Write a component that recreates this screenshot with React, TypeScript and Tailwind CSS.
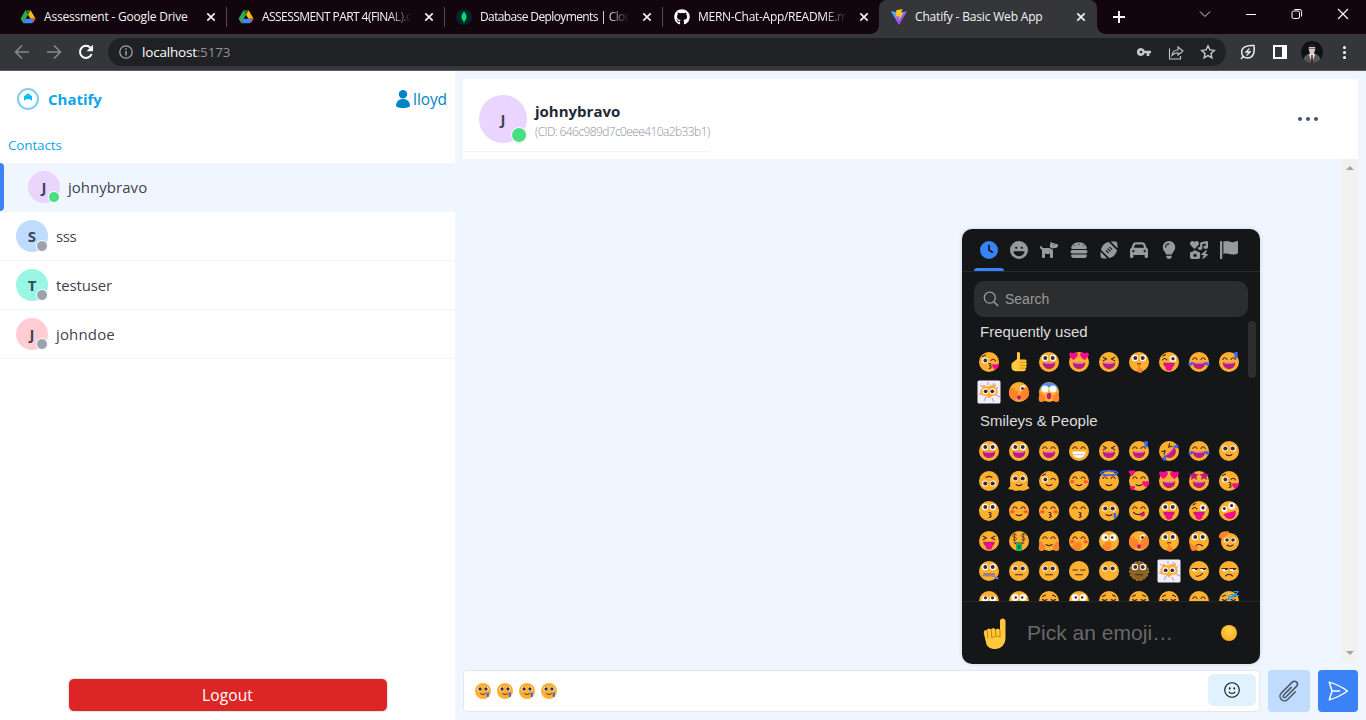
import React, { type ReactNode } from 'react';
import { FaBurger, FaCar, FaClock, FaDog, FaFaceLaugh, FaFootball, FaIcons, FaLightbulb, FaGithub } from 'react-icons/fa6';

/* ---------- emoji drawing ---------- */

const DARK = '#402a32';
const PINK = '#f70a8d';
const PLUM = '#bb1d80';
const BLUE = '#3b63f5';

const line = { fill: 'none', stroke: DARK, strokeWidth: 1.1, strokeLinecap: 'round' as const, strokeLinejoin: 'round' as const };
const heart = 'M0 3C-5-.5-3.6-4 0-2.1 3.6-4 5-.5 0 3Z';

const PARTS: Record<string, ReactNode> = {
  face: <circle cx="10" cy="10" r="10" fill="#ffb02e" />,
  dotface: (
    <>
      <circle cx="10" cy="10" r="9.4" fill="#8a6422" />
      <circle cx="10" cy="10" r="9.5" fill="none" stroke="#f08a4b" strokeWidth="1" strokeDasharray="2 2" />
    </>
  ),
  melt: (
    <path d="M1 9C1 4 4.5 0 10 0s9 4 9 9c0 3.500-1 5 0 6.500 1.800.6 2 2.500.3 2.500-2 0-3.300 2.500-6.300 1.700-2-.8-3-.7-5 0C5 20.300 4 18 1.500 18.500-1 19-1 16.500.800 16 1.800 14 1 12 1 9Z" fill="#ffb02e" />
  ),
  cloud: (
    <>
      <rect x="-1.500" y="-1.500" width="23" height="23" rx="1.500" fill="#f3edfb" />
      <path d="M1 3l4 3M15 1l-2 4M19 5l-3 3M0 12l4 0M5 19l2-4M13 16l2 4M17 13l4 2M9 0l0 3" stroke="#a88ee0" strokeWidth="1" />
      <path d="M10 4l2-1.500.800 1.800L17 2l-.5 4c3 2 3 6 0 7.500L13 14l-3 2.500L7 14l-3.500-.5c-3-2-3-5.500 0-7.500L4 2.500l4 2Z" fill="#ffb02e" />
      <circle cx="6.500" cy="9.300" r="3" fill="#fff" />
      <circle cx="13.500" cy="9.300" r="3" fill="#fff" />
      <circle cx="6.700" cy="9.300" r="1.900" fill={DARK} />
      <circle cx="13.300" cy="9.300" r="1.900" fill={DARK} />
    </>
  ),
  open: (
    <>
      <circle cx="6" cy="6" r="3.200" fill="#fff" />
      <circle cx="14" cy="6" r="3.200" fill="#fff" />
      <circle cx="6.300" cy="6" r="2" fill={DARK} />
      <circle cx="13.700" cy="6" r="2" fill={DARK} />
    </>
  ),
  small: (
    <>
      <circle cx="6" cy="7.500" r="2.900" fill="#fff" />
      <circle cx="14" cy="7.500" r="2.900" fill="#fff" />
      <circle cx="6.300" cy="7.500" r="2.100" fill={DARK} />
      <circle cx="13.700" cy="7.500" r="2.100" fill={DARK} />
    </>
  ),
  pin: (
    <>
      <circle cx="6" cy="6.500" r="3.500" fill="#fff" />
      <circle cx="14" cy="6.500" r="3.500" fill="#fff" />
      <circle cx="6.800" cy="6.500" r="1.300" fill={DARK} />
      <circle cx="13.200" cy="6.500" r="1.300" fill={DARK} />
    </>
  ),
  roll: (
    <>
      <circle cx="6" cy="8" r="3.300" fill="#fff" />
      <circle cx="14" cy="8" r="3.300" fill="#fff" />
      <circle cx="6.500" cy="6.800" r="1.600" fill={DARK} />
      <circle cx="13.500" cy="6.800" r="1.600" fill={DARK} />
    </>
  ),
  wide: (
    <>
      <path d="M.3 8A10 10 0 0 1 19.700 8C16 4 4 4 .3 8Z" fill="#4e8ff5" />
      <circle cx="6" cy="7" r="3.600" fill="#fff" />
      <circle cx="14" cy="7" r="3.600" fill="#fff" />
    </>
  ),
  happy: <path d="M3.800 7.500q2-3.400 4.200 0M12 7.500q2-3.400 4.200 0" {...line} />,
  sad: <path d="M3.500 8.500q2.200 2 4.300 0M12.200 8.500q2.200 2 4.300 0M3.500 5.500l3-1.500M16.500 5.500l-3-1.500" {...line} />,
  squint: <path d="M4.200 5.200l3.400 1.900-3.400 1.700M15.800 5.200l-3.400 1.900 3.400 1.700" {...line} />,
  dash: <path d="M4 9h4.200M11.800 9H16" {...line} />,
  wink: (
    <>
      <circle cx="6" cy="8.500" r="3" fill="#fff" />
      <circle cx="6.300" cy="8.500" r="1.900" fill={DARK} />
      <path d="M12 8.500q2.200-2.500 4.500.3M3.500 4.500l3-1.500" {...line} />
    </>
  ),
  winkR: (
    <>
      <circle cx="14" cy="6.800" r="3.300" fill="#fff" />
      <circle cx="14" cy="6.800" r="1.700" fill={DARK} />
      <path d="M3.500 7.800q2-2.600 4.300 0M4 4l2.500-1.500" {...line} />
    </>
  ),
  side: (
    <>
      <path d="M3 7.500h6a3 3 0 0 1-6 0ZM11 7.500h6a3 3 0 0 1-6 0Z" fill="#fff" />
      <path d="M6 7.500h3a2 2 0 0 1-3 1.500ZM14 7.500h3a2 2 0 0 1-3 1.500Z" fill={DARK} />
      <path d="M3 7.500h6M11 7.500h6" {...line} />
    </>
  ),
  crazy: (
    <>
      <circle cx="5.500" cy="8" r="3" fill="#fff" />
      <circle cx="12.800" cy="5" r="3.500" fill="#fff" />
      <circle cx="5.300" cy="7.500" r="1.500" fill={DARK} />
      <circle cx="12.600" cy="4.500" r="1.600" fill={DARK} />
      <path d="M4.500 13l12-3.200c1 4-1 8-5 8.200-3 0-6-2-7-5Z" fill={PINK} />
    </>
  ),
  hearts: (
    <>
      <path d={heart} transform="translate(4.500 4) scale(1.350)" fill={PINK} />
      <path d={heart} transform="translate(15.500 4) scale(1.350)" fill={PINK} />
    </>
  ),
  stars: (
    <path d="M5 0l1.300 3 3.500 0-2.500 2.600 1 3.400L5 7.300 2 9l.5-3.400L0 3h3.600ZM15 0l1.300 3H20l-2.600 2.600.6 3.400-3-1.700L11.800 9l1-3.400-2.500-2.600h3.500Z" fill={PLUM} />
  ),
  dollar: (
    <path d="M7.700 4.500C5 0 1.500 6 5.300 6.200 9.500 6.500 6.500 12 3.500 8M5.500 2.500v8M16.500 4.500c-2.700-4.500-6.200 1.500-2.400 1.700 4.200.3 1.200 5.800-1.800 1.800M14.300 2.500v8" fill="none" stroke={DARK} strokeWidth=".8" />
  ),
  grin: (
    <>
      <path d="M3.800 10.500h12.400c0 4.300-2.700 6.500-6.200 6.500s-6.200-2.200-6.200-6.500Z" fill={PLUM} />
      <path d="M5 10.500h10v.800q-5 1-10 0Z" fill="#fff" opacity=".5" />
    </>
  ),
  teeth: (
    <>
      <path d="M3.500 10.500h13c0 4.500-3 6.500-6.500 6.500s-6.500-2-6.500-6.500Z" fill="#fff" />
      <path d="M4.500 13.700h11" stroke="#c99ac1" strokeWidth=".8" />
    </>
  ),
  smile: <path d="M7 13.500q3 2.200 6 0" {...line} />,
  frown: <path d="M6.500 15q3.500-3.600 7 0" {...line} />,
  flat: <path d="M6.500 13.800h7" {...line} />,
  smirk: <path d="M7 15q4 1 6.500-2.500" {...line} />,
  kiss: <path d="M10 11.500c2.600-.2 2.400 2 .5 2.300 2.100.1 2.400 2.700-.3 2.600" {...line} />,
  lips: <path d={heart} transform="translate(16.500 14.700) scale(1.050)" fill={PINK} />,
  tongue: (
    <>
      <path d="M4.200 10.800h11.600c0 3-2.400 5.400-5.800 5.400s-5.800-2.400-5.800-5.400Z" fill={PLUM} />
      <path d="M6.500 12.200h7v3.500c0 4-7 4-7 0Z" fill={PINK} />
    </>
  ),
  yum: (
    <>
      <path d="M4.500 11.500q5 4.500 10.500-.5" {...line} />
      <path d="M11 13.500l4.500-2.300c1.500 3-1.500 5-3.500 4.300Z" fill={PINK} />
    </>
  ),
  bill: (
    <>
      <path d="M4.200 11.500h11.600q-5.800 5-11.600 0Z" fill={DARK} />
      <path d="M7 12h6v8H7Z" fill="#16b45a" />
      <path d="M9 14.500h2v3H9Z" fill="#0b6b3a" />
    </>
  ),
  scream: <ellipse cx="10" cy="14" rx="2.200" ry="3.300" fill={PLUM} />,
  blush: (
    <>
      <ellipse cx="3.300" cy="10.800" rx="2.300" ry="1.700" fill="#ff5a3c" />
      <ellipse cx="16.700" cy="10.800" rx="2.300" ry="1.700" fill="#ff5a3c" />
    </>
  ),
  shush: (
    <>
      <path d="M8.500 12q1.500-.8 3 0" {...line} />
      <path d="M9.200 12.800c0-1.500 1.800-1.500 1.800 0v2.700c3 0 3.200 3 2.500 4-1 1.800-4 1.800-5 0-.800-1.500-.300-3.500.7-4Z" fill="#ff822d" />
    </>
  ),
  cover: <path d="M3.500 13.500l2 .5 1-3 5 0c2 2 1 8-3 9-3 0-5-2-5-6.500Z" fill="#ff822d" />,
  chin: <path d="M1 13l2-1 1 3 5-1c1 2-1 6-5 6-2 0-3-3-3-7Z" fill="#ff822d" />,
  palms: (
    <path d="M.5 12l2-2 1.500 3 2 1c1 4-1 6-4 6S-.5 16 .5 12ZM19.500 12l-2-2-1.500 3-2 1c-1 4 1 6 4 6s2.500-4 1.500-8Z" fill="#ff822d" />
  ),
  peek: (
    <>
      <path d="M0 9l2-4 1 2 2-2 1 3 3 1c1 4-1 9-4 9-4-1-5.500-5-5-9ZM20 9l-2-3-7 7c-1 3 1 5 4 5 4-1 5.500-5 5-9Z" fill="#ff822d" />
      <circle cx="14" cy="6.500" r="2.900" fill="#fff" />
      <circle cx="13.500" cy="6.500" r="1.500" fill={DARK} />
      <path d="M11.500 10.500l5-6 2 3-4 6Z" fill="#ff822d" />
      <ellipse cx="10" cy="15.500" rx="2" ry="2.200" fill={PLUM} />
    </>
  ),
  hail: (
    <>
      <circle cx="11" cy="11" r="9" fill="#ffb02e" />
      <circle cx="7.800" cy="9" r="2.600" fill="#fff" />
      <circle cx="14.200" cy="9" r="2.600" fill="#fff" />
      <circle cx="8" cy="9" r="1.800" fill={DARK} />
      <circle cx="14" cy="9" r="1.800" fill={DARK} />
      <path d="M8 14q3 2.500 6 0" {...line} />
      <path d="M0 4.500C1 1 6-.500 10 .800l.500 1.700L3.500 7.500C1.500 8-.800 7 0 4.500Z" fill="#ff822d" />
    </>
  ),
  sweat: <path d="M15.500 0h3.200v5c0 2-3.200 2-3.200 0Z" fill={BLUE} />,
  tear: <path d="M14.600 12h2.700v4c0 2-2.700 2-2.700 0Z" fill={BLUE} />,
  joy: <path d="M3.500 9.500l.5 2c-.5 3-5 3-4.700 0ZM16.500 9.500l-.5 2c.5 3 5 3 4.700 0Z" fill={BLUE} />,
  halo: <ellipse cx="10" cy="2" rx="8.500" ry="2.300" fill="none" stroke={BLUE} strokeWidth="1.600" />,
  love: (
    <>
      <path d={heart} transform="translate(3 2)" fill={PINK} />
      <path d={heart} transform="translate(16.800 13) scale(1.100)" fill={PINK} />
      <path d={heart} transform="translate(3.500 17) scale(.8)" fill={PINK} />
    </>
  ),
  zip: (
    <>
      <path d="M4 13.500l1.500-1.500 1.500 2 1.500-2 1.500 2 1.500-2 1.500 2 1.500-2 1 2M4 15l1.500-1 1.500 1.500 1.500-1.500 1.500 1.500 1.500-1.500 1.500 1.500 1.500-1.500" fill="none" stroke="#5a5ec4" strokeWidth="1" />
      <path d="M14.500 14.500l4.500 3.500" stroke="#8a80d8" strokeWidth="2" />
    </>
  ),
  zzz: <path d="M8 5h3.500L8.500 8.500H12M11.500 3.500h3.500L12 7h3.500M15 .5h4L16 4.500h4" fill="none" stroke="#1fa2f0" strokeWidth="1.100" />,
};

const OWN_BASE = ['dotface', 'melt', 'cloud', 'hail'];

function Emoji({ parts, className = 'size-5' }: { parts: string; className?: string }) {
  const names = parts.split(' ');
  const base = OWN_BASE.includes(names[0]) ? names : ['face', ...names];
  const turned = names.includes('flip') ? 'rotate-180' : names.includes('tilt') ? '-rotate-45' : '';
  if (names[0] === 'thumb') {
    return (
      <svg viewBox="0 0 20 20" className={`${className} overflow-visible`}>
        <path d="M2.500 11.500L8 7V1.500C8-.5 11-.5 11 2v5.500h5c2 0 2 2.400.7 2.800 1.600.5 1.400 2.700 0 3 1.200.6 1 2.500-.3 2.800.8 1.300.1 3.200-1.700 3.200H7c-3 0-4.500-1.800-4.500-4Z" fill="#ffc83d" />
        <path d="M10.500 10.300h6M10.500 13.300h6M10.500 16.200h5.700" stroke="#d67d00" strokeWidth=".8" />
      </svg>
    );
  }
  return (
    <svg viewBox="0 0 20 20" className={`${className} overflow-visible ${turned}`}>
      {base.map((n, i) => (
        <React.Fragment key={i}>{PARTS[n]}</React.Fragment>
      ))}
    </svg>
  );
}

const FREQUENT = [
  'wink kiss lips', 'thumb', 'open grin', 'grin hearts', 'squint grin', 'open shush', 'winkR tongue', 'happy grin joy', 'happy grin sweat',
  'cloud', 'peek', 'wide scream palms',
];

const SMILEYS = [
  'open grin', 'open grin', 'happy grin', 'happy teeth', 'squint grin', 'happy grin sweat', 'tilt squint grin joy', 'happy grin joy', 'small smile',
  'flip small smile', 'melt small smile', 'wink smile', 'happy blush smile', 'happy smile halo', 'happy smile love', 'grin hearts', 'grin stars', 'wink kiss lips',
  'open kiss', 'happy blush smile', 'happy blush kiss', 'happy kiss', 'small smile tear', 'happy yum', 'open tongue', 'winkR tongue', 'crazy',
  'squint tongue', 'dollar bill', 'happy smile palms', 'happy blush cover', 'pin cover', 'peek', 'open shush', 'open frown chin', 'hail',
  'open zip', 'small flat', 'small flat', 'dash flat', 'small', 'dotface open flat', 'cloud', 'side smirk', 'side frown',
  'roll flat', 'pin teeth', 'sad flat', 'pin cover', 'sad smile', 'sad frown', 'sad smile', 'happy grin', 'sad zzz',
];

/* ---------- browser chrome ---------- */

const DriveIcon = () => (
  <svg viewBox="0 0 16 16" className="size-4">
    <path d="M5.400 1.300h5.200L8 5.800Z" fill="#188038" />
    <path d="M5.400 1.300L8 5.800 3.200 14.200.6 9.800Z" fill="#34a853" />
    <path d="M10.600 1.300l5 8.500h-5.200L8 5.800Z" fill="#fbbc04" />
    <path d="M10.400 9.800h5.200L13 14.300Z" fill="#ea4335" />
    <path d="M5.600 9.800h8l-1.500 4.500H3.200Z" fill="#4285f4" />
  </svg>
);

const MongoIcon = () => (
  <svg viewBox="0 0 16 16" className="size-4">
    <circle cx="8" cy="8" r="8" fill="#022430" />
    <path d="M8 2.500c3.300 4 3.300 7.200 0 10.300C4.700 9.700 4.700 6.500 8 2.500Z" fill="#00ed64" />
    <path d="M8 4v10" stroke="#00b85f" strokeWidth=".7" />
  </svg>
);

const ViteIcon = () => (
  <svg viewBox="0 0 16 16" className="size-4">
    <defs>
      <linearGradient id="vite" x1="0" y1="0" x2="1" y2="1">
        <stop offset="0" stopColor="#41d1ff" />
        <stop offset=".6" stopColor="#a24dfc" />
        <stop offset="1" stopColor="#bd34fe" />
      </linearGradient>
    </defs>
    <path d="M0 2.300l8 1.200 8-1.200L8 16Z" fill="url(#vite)" />
    <path d="M5.200 1.200L11.500 0 10 3.800l2.200.1L7.800 11.500l.4-4.500-3 .400Z" fill="#ffc61a" />
  </svg>
);

const Close = () => (
  <svg viewBox="0 0 16 16" className="size-4 shrink-0">
    <path d="M4.300 4.300l7.400 7.400M11.700 4.300l-7.400 7.400" stroke="#f1f1f1" strokeWidth="1.700" />
  </svg>
);

const PLAIN = 'w-[218px] pr-2 pl-[11px]';
const FADE = '[mask-image:linear-gradient(to_right,#000_84%,transparent_99%)]';

const TABS = [
  { title: 'Assessment - Google Drive', icon: <DriveIcon />, box: PLAIN, cls: 'tracking-[-0.21px]' },
  { title: 'ASSESSMENT PART 4(FINAL).c', icon: <DriveIcon />, box: PLAIN, cls: `tracking-[-0.57px] ${FADE}` },
  { title: 'Database Deployments | Clou', icon: <MongoIcon />, box: PLAIN, cls: `tracking-[-0.62px] ${FADE}` },
  { title: 'MERN-Chat-App/README.m', icon: <FaGithub className="size-4 text-white" />, box: 'w-[216px] pr-[7px] pl-[11px]', cls: `tracking-[-0.29px] ${FADE}` },
  { title: 'Chatify - Basic Web App', icon: <ViteIcon />, box: 'w-[218px] rounded-t-lg bg-[#35363a] pr-2 pl-3', cls: 'tracking-[-0.18px]', active: true },
];

function BrowserBar() {
  return (
    <header className="shrink-0">
      <div className="flex h-[34px] items-stretch bg-[#12050d] pl-[9px]">
        {TABS.map((t, i) => (
          <div key={t.title} className={`relative flex items-center ${t.box}`}>
            {t.active && (
              <>
                <span className="absolute bottom-0 -left-2 size-2 bg-[radial-gradient(circle_at_0_0,#12050d_7.5px,#35363a_8px)]" />
                <span className="absolute -right-2 bottom-0 size-2 bg-[radial-gradient(circle_at_100%_0,#12050d_7.5px,#35363a_8px)]" />
              </>
            )}
            <span className="shrink-0">{t.icon}</span>
            <span className={`ml-2 flex-1 overflow-hidden text-[12px] whitespace-nowrap text-[#f4f4f4] ${t.cls}`}>{t.title}</span>
            <span className="ml-2">
              <Close />
            </span>
            {i < 3 && <span className="absolute top-[7px] right-0 h-5 w-px bg-[#534a50]" />}
          </div>
        ))}
        <svg viewBox="0 0 16 16" className="mt-[9px] ml-[14px] size-4">
          <path d="M8 2v12M2 8h12" stroke="#fff" strokeWidth="1.900" />
        </svg>
        <div className="ml-auto flex items-center gap-[34px] pr-[17px] pb-[6px]">
          <svg viewBox="0 0 12 12" className="size-3"><path d="M1 3.500l5 5 5-5" fill="none" stroke="#ddd" /></svg>
          <svg viewBox="0 0 12 12" className="size-3"><path d="M1 6.500h10" stroke="#fff" /></svg>
          <svg viewBox="0 0 12 12" className="size-3">
            <rect x="1" y="3" width="7.500" height="7.500" rx="1.500" fill="none" stroke="#fff" />
            <path d="M3.500 1.500H9a2 2 0 0 1 1.600 2v5" fill="none" stroke="#fff" />
          </svg>
          <svg viewBox="0 0 12 12" className="size-3"><path d="M1 1l10 10M11 1L1 11" stroke="#fff" strokeWidth="1.100" /></svg>
        </div>
      </div>
      <div className="flex h-[37px] items-center border-b border-[#5b5c60] bg-[#35363a] pl-[14px]">
        <svg viewBox="0 0 16 16" className="size-4"><path d="M15 8H2M8 1.500L1.500 8 8 14.500" fill="none" stroke="#8a8b8e" strokeWidth="1.500" /></svg>
        <svg viewBox="0 0 16 16" className="ml-4 size-4"><path d="M1 8h13M8 1.500L14.500 8 8 14.500" fill="none" stroke="#8a8b8e" strokeWidth="1.500" /></svg>
        <svg viewBox="0 0 16 16" className="ml-4 size-4">
          <path d="M13.600 10A6 6 0 1 1 12.400 3.800" fill="none" stroke="#fff" strokeWidth="2" />
          <path d="M15 .8v6.400H8.600Z" fill="#fff" />
        </svg>
        <div className="ml-[14px] flex h-7 w-[1118px] items-center rounded-full bg-[#202124] pr-[10px] pl-[11px]">
          <svg viewBox="0 0 14 14" className="size-[14px]">
            <circle cx="7" cy="7" r="6.200" fill="none" stroke="#a0a3a8" strokeWidth="1.300" />
            <path d="M7 6v4.500M7 3.300v1.500" stroke="#a0a3a8" strokeWidth="1.500" />
          </svg>
          <span className="ml-[9px] text-[13.500px] tracking-[-0.2px] text-white">
            localhost<span className="text-[#8f9296]">:5173</span>
          </span>
          <div className="ml-auto flex items-center gap-4">
            <svg viewBox="0 0 16 16" className="size-4">
              <path d="M5 4a4 4 0 1 0 3.700 5.300h2V12h2.700V9.300H15V6.700H8.700A4 4 0 0 0 5 4Zm0 2.700a1.300 1.300 0 1 1 0 2.600 1.300 1.300 0 0 1 0-2.600Z" fill="#c4c7cb" />
            </svg>
            <svg viewBox="0 0 16 16" className="size-4">
              <path d="M1.500 4.500V15h11v-3M4 11.500c.3-3.700 2.500-5.500 6-5.500V3l5 4-5 4V8.700c-2.600 0-4.500.8-6 2.800Z" fill="none" stroke="#c4c7cb" strokeWidth="1.100" />
            </svg>
            <svg viewBox="0 0 16 16" className="size-4">
              <path d="M8 1.800l1.900 4.100 4.400.5-3.300 3 .9 4.400L8 11.600l-3.900 2.200.9-4.400-3.300-3 4.400-.5Z" fill="none" stroke="#c4c7cb" strokeWidth="1.400" />
            </svg>
          </div>
        </div>
        <div className="ml-[14px] flex items-center">
          <svg viewBox="0 0 16 16" className="size-4">
            <path d="M14 1.500C6 1 1.500 3.500 1.700 8.500c.2 3.500 2.800 5.500 6 5.500 4.800 0 7.300-4 6.300-12.500Z" fill="none" stroke="#eee" strokeWidth="1.500" />
            <path d="M9.500 4.500L6 8h4l-3.500 3.500M1 15l2.500-3" fill="none" stroke="#eee" strokeWidth="1.300" />
          </svg>
          <svg viewBox="0 0 14 14" className="ml-[17px] size-[14px]">
            <path d="M0 0h14v14H0ZM2 2v10h7V2Z" fill="#fff" fillRule="evenodd" />
          </svg>
          <svg viewBox="0 0 22 22" className="ml-[14px] size-[22px]">
            <circle cx="11" cy="11" r="11" fill="#111" />
            <path d="M2.500 18c.8-3 3-4.500 6-5.500h5c3 1 5.200 2.500 6 5.500a11 11 0 0 1-17 0Z" fill="#55585b" />
            <path d="M9 12h4l1 2-3 8-3-8Z" fill="#e2e2e2" />
            <path d="M10.400 14h1.200l.5 8H9.900Z" fill="#6a1a26" />
            <path d="M7.800 6h6.400c.3 4-1.200 7-3.200 7s-3.500-3-3.200-7Z" fill="#e0c8bc" />
            <path d="M7.300 7C7 1.500 15 1.500 14.700 7L13 4.800H9Z" fill="#2a2628" />
            <path d="M8 7.500h6" stroke="#5c7690" strokeWidth="1" />
          </svg>
          <div className="ml-[20px] flex flex-col gap-[2px]">
            <span className="size-[3px] rounded-full bg-white" />
            <span className="size-[3px] rounded-full bg-white" />
            <span className="size-[3px] rounded-full bg-white" />
          </div>
        </div>
      </div>
    </header>
  );
}

/* ---------- sidebar ---------- */

const CONTACTS = [
  { name: 'johnybravo', color: 'bg-[#e9d5ff]', online: true, cls: 'tracking-[0.03px]' },
  { name: 'sss', color: 'bg-[#bfdbfe]', online: false, cls: 'tracking-[-0.4px]' },
  { name: 'testuser', color: 'bg-[#99f6e4]', online: false, cls: 'tracking-[-0.15px]' },
  { name: 'johndoe', color: 'bg-[#fecdd3]', online: false, cls: 'tracking-[0.15px]' },
];

function Sidebar() {
  return (
    <aside className="flex w-[455px] shrink-0 flex-col bg-white">
      <div className="flex items-center justify-between pt-4 pr-2 pl-4">
        <div className="flex items-center text-[#0ea5e9]">
          <svg viewBox="0 0 24 24" className="size-6">
            <circle cx="12" cy="12" r="10" fill="none" stroke="#87ceeb" strokeWidth="2.100" />
            <path d="M8 13.800V9.300l4-3.100 4 3.100v4.500l-2.400-1.500h-3.200Z" fill="#00bfff" />
          </svg>
          <span className="ml-2 text-[15px] leading-6 font-bold">Chatify</span>
        </div>
        <div className="flex items-center text-[#0284c7]">
          <svg viewBox="0 0 14 18" className="mb-px h-[18px] w-[14px]">
            <circle cx="7" cy="4.300" r="4.200" fill="currentColor" />
            <path d="M0 16c0-4.500 3-7 7-7s7 2.500 7 7c-1 1.500-3.500 2-7 2s-6-.5-7-2Z" fill="currentColor" />
          </svg>
          <span className="ml-[3px] text-[15.500px] leading-6 tracking-[-0.1px]">lloyd</span>
        </div>
      </div>
      <div className="mt-[25px] h-[27px] pl-2 text-[13.500px] leading-[19px] tracking-[-0.15px] text-[#0ea5e9]">Contacts</div>
      {CONTACTS.map((c, i) => (
        <div key={c.name} className={`flex h-[49px] items-center border-b ${i === 0 ? 'border-[#eff6ff] bg-[#eff6ff]' : 'border-[#f3f4f6]'}`}>
          {i === 0 && <span className="h-12 w-1 rounded-r-md bg-[#3b82f6]" />}
          <div className={`relative flex size-8 items-center justify-center rounded-full ${c.color} ${i === 0 ? 'ml-6' : 'ml-4'}`}>
            <span className="text-[15px] font-bold text-[#1f2937]/85">{c.name[0].toUpperCase()}</span>
            <span className={`absolute right-0 bottom-0 size-3 rounded-full border border-white ${c.online ? 'bg-[#4ade80]' : 'bg-[#9ca3af]'}`} />
          </div>
          <span className={`ml-2 text-[15px] text-[#1f2937]/90 ${c.cls}`}>{c.name}</span>
        </div>
      ))}
      <button className="mx-auto mt-auto mb-2 h-[34px] w-[320px] rounded-md border border-[#e5e7eb] bg-[#dc2626] pt-[2px] text-[15.500px] tracking-[0.1px] text-white">Logout</button>
    </aside>
  );
}

/* ---------- picker ---------- */

const FlagIcon = () => (
  <svg viewBox="0 0 512 512" className="size-[18px]" fill="currentColor">
    <path d="M64 496C64 504.8 56.75 512 48 512h-32C7.250 512 0 504.8 0 496V32c0-17.750 14.250-32 32-32s32 14.250 32 32V496zM476.3 0c-6.365 0-13.010 1.350-19.340 4.233c-45.690 20.860-79.560 27.940-107.8 27.940c-59.960 0-94.810-31.860-163.9-31.870C160.9 .3055 131.6 4.867 96 15.750v350.5c32-9.984 59.870-14.100 84.850-14.100c73.630 0 124.9 31.780 198.6 31.780c31.910 0 68.020-5.971 111.1-23.090C504.1 355.9 512 344.4 512 332.1V30.730C512 11.100 495.3 0 476.3 0z" />
  </svg>
);

const NAV = [FaClock, FaFaceLaugh, FaDog, FaBurger, FaFootball, FaCar, FaLightbulb, FaIcons, FlagIcon];

function EmojiGrid({ items }: { items: string[] }) {
  return (
    <div className="grid w-[270px] grid-cols-9">
      {items.map((e, i) => (
        <div key={i} className="flex size-[30px] items-center justify-center">
          <Emoji parts={e} />
        </div>
      ))}
    </div>
  );
}

function Picker() {
  return (
    <div className="absolute -right-px bottom-[47px] z-10 flex h-[435px] w-[298px] flex-col overflow-hidden rounded-[10px] bg-[#151617] font-['Liberation_Sans',Arial,sans-serif] shadow-[0_0_4px_rgba(0,0,0,0.15)]">
      <nav className="flex h-[43px] shrink-0 border-b border-[#27282a] px-3 text-[#98999a]">
        {NAV.map((Icon, i) => (
          <div key={i} className={`relative flex w-[30px] items-center justify-center ${i === 0 ? 'text-[#3a82f7]' : ''}`}>
            <Icon className="size-[18px]" />
            {i === 0 && <span className="absolute bottom-0 h-[3px] w-[30px] rounded-t-[3px] bg-[#3a82f7]" />}
          </div>
        ))}
      </nav>
      <div className="mx-3 mt-[9px] flex h-9 shrink-0 items-center rounded-[10px] bg-[#2c2d2e] pl-[9px] text-[14px] text-[#9a9b9c]">
        <svg viewBox="0 0 16 16" className="size-4">
          <circle cx="6.800" cy="6.700" r="5.500" fill="none" stroke="currentColor" strokeWidth="1.300" />
          <path d="M10.800 10.700l4.400 4.300" stroke="currentColor" strokeWidth="1.500" />
        </svg>
        <span className="ml-[6px]">Search</span>
      </div>
      <div className="flex h-[285px] min-h-0 shrink-0 overflow-hidden">
        <div className="ml-3 w-[274px] text-[15px] text-[#dededf]">
          <div className="h-[30px] pl-[6px] leading-[30px]">Frequently used</div>
          <EmojiGrid items={FREQUENT} />
          <div className="h-[29px] pl-[6px] leading-[28px]">Smileys &amp; People</div>
          <EmojiGrid items={SMILEYS} />
        </div>
        <span className="mt-1 h-[57px] w-2 rounded bg-[#2c2d2e]" />
      </div>
      <div className="-mt-px flex flex-1 items-center border-t border-[#27282a] pr-[23px] pl-[21px]">
        <svg viewBox="0 0 24 32" className="mt-[2px] h-8 w-6">
          <path d="M17 3c0-3.500 5.500-3.500 5.500 0v17c0 6.500-4.500 11-10.500 11-5 0-8.500-2.500-9-6.500L.8 15c-.3-2.500 2-3.500 3-2.500 0-2 3.500-2.500 4.300-.8.700-2 4-1.700 4.500.2C13.500 10.500 16 10.500 17 12Z" fill="#ffc83d" />
          <path d="M4 12.500l1 8M8.300 12l.5 7M12.700 12v6M17 12v7c-3-2-6 0-9 1" fill="none" stroke="#d67d00" strokeWidth="1" />
        </svg>
        <span className="ml-[20px] text-[21px] tracking-[0.02px] text-[#68696a]">Pick an emoji…</span>
        <span className="ml-auto size-4 rounded-full bg-[radial-gradient(circle_at_50%_35%,#ffd34a,#f7a313)]" />
      </div>
    </div>
  );
}

/* ---------- chat ---------- */

function Chat() {
  return (
    <main className="flex min-w-0 flex-1 flex-col bg-[#eff6ff] p-2">
      <div className="flex h-20 shrink-0 items-start justify-between bg-white">
        <div className="flex h-[73px] items-center border-b border-[#f3f4f6] pt-2 pl-4">
          <div className="relative flex size-12 items-center justify-center rounded-full bg-[#e9d5ff]">
            <span className="text-[15px] font-bold text-[#1f2937]/85">J</span>
            <span className="absolute right-0 bottom-0 size-4 rounded-full border border-white bg-[#4ade80]" />
          </div>
          <div className="ml-2 flex flex-col pt-[3px]">
            <span className="text-[15px] leading-[22px] font-bold text-[#1f2937]">johnybravo</span>
            <span className="text-[12px] leading-[19px] font-light tracking-[-0.6px] text-[#8b929e]">(CID: 646c989d7c0eee410a2b33b1)</span>
          </div>
        </div>
        <div className="mt-[38px] mr-10 flex gap-1">
          <span className="size-1 rounded-full bg-[#475569]" />
          <span className="size-1 rounded-full bg-[#475569]" />
          <span className="size-1 rounded-full bg-[#475569]" />
        </div>
      </div>
      <div className="flex min-h-0 flex-1 justify-end">
        <div className="flex w-[17px] flex-col items-center justify-between bg-[#f1f1f1] py-[7px]">
          <span className="size-0 border-x-[4px] border-b-[4px] border-x-transparent border-b-[#a3a3a3]" />
          <span className="size-0 border-x-[4px] border-t-[4px] border-x-transparent border-t-[#a3a3a3]" />
        </div>
      </div>
      <div className="mt-2 flex h-[42px] shrink-0 gap-2">
        <div className="relative flex flex-1 items-center rounded-sm border border-[#e5e7eb] bg-white pr-[3px] pl-[11px]">
          <Picker />
          <div className="flex gap-[6px]">
            {[0, 1, 2, 3].map((i) => (
              <Emoji key={i} parts="small smile tear" className="size-4" />
            ))}
          </div>
          <button className="mb-[2px] ml-auto flex h-8 w-12 items-center justify-center rounded-md bg-[#e0f2fe]">
            <svg viewBox="0 0 16 16" className="size-4">
              <circle cx="8" cy="8" r="7.300" fill="none" stroke="#111" strokeWidth="1.100" />
              <ellipse cx="5.700" cy="6.400" rx=".9" ry="1.100" fill="#111" />
              <ellipse cx="10.300" cy="6.400" rx=".9" ry="1.100" fill="#111" />
              <path d="M4.800 9.800c1.300 2.200 5.100 2.200 6.400 0" fill="none" stroke="#111" strokeWidth="1.100" />
            </svg>
          </button>
        </div>
        <button className="flex w-[42px] items-center justify-center rounded-sm bg-[#bfdbfe] text-[#4b5563]">
          <svg viewBox="0 0 24 24" className="size-6" fill="none" stroke="currentColor" strokeWidth="1.500" strokeLinecap="round" strokeLinejoin="round">
            <path d="M18.375 12.739l-7.693 7.693a4.500 4.500 0 0 1-6.364-6.364l10.940-10.940A3 3 0 1 1 19.500 7.372L8.552 18.320m.009-.010l-.010.010m5.699-9.941l-7.810 7.810a1.500 1.500 0 0 0 2.112 2.130" />
          </svg>
        </button>
        <button className="flex w-10 items-center justify-center rounded-sm bg-[#3b82f6] text-white">
          <svg viewBox="0 0 24 24" className="size-6" fill="none" stroke="currentColor" strokeWidth="1.500" strokeLinecap="round" strokeLinejoin="round">
            <path d="M6 12L3.269 3.126A59.768 59.768 0 0 1 21.485 12 59.770 59.770 0 0 1 3.270 20.876L5.999 12Zm0 0h7.500" />
          </svg>
        </button>
      </div>
    </main>
  );
}

export default function App() {
  return (
    <div className="flex h-[720px] w-[1366px] flex-col overflow-hidden font-['Open_Sans','Noto_Sans',sans-serif]">
      <BrowserBar />
      <div className="flex min-h-0 flex-1">
        <Sidebar />
        <Chat />
      </div>
    </div>
  );
}
